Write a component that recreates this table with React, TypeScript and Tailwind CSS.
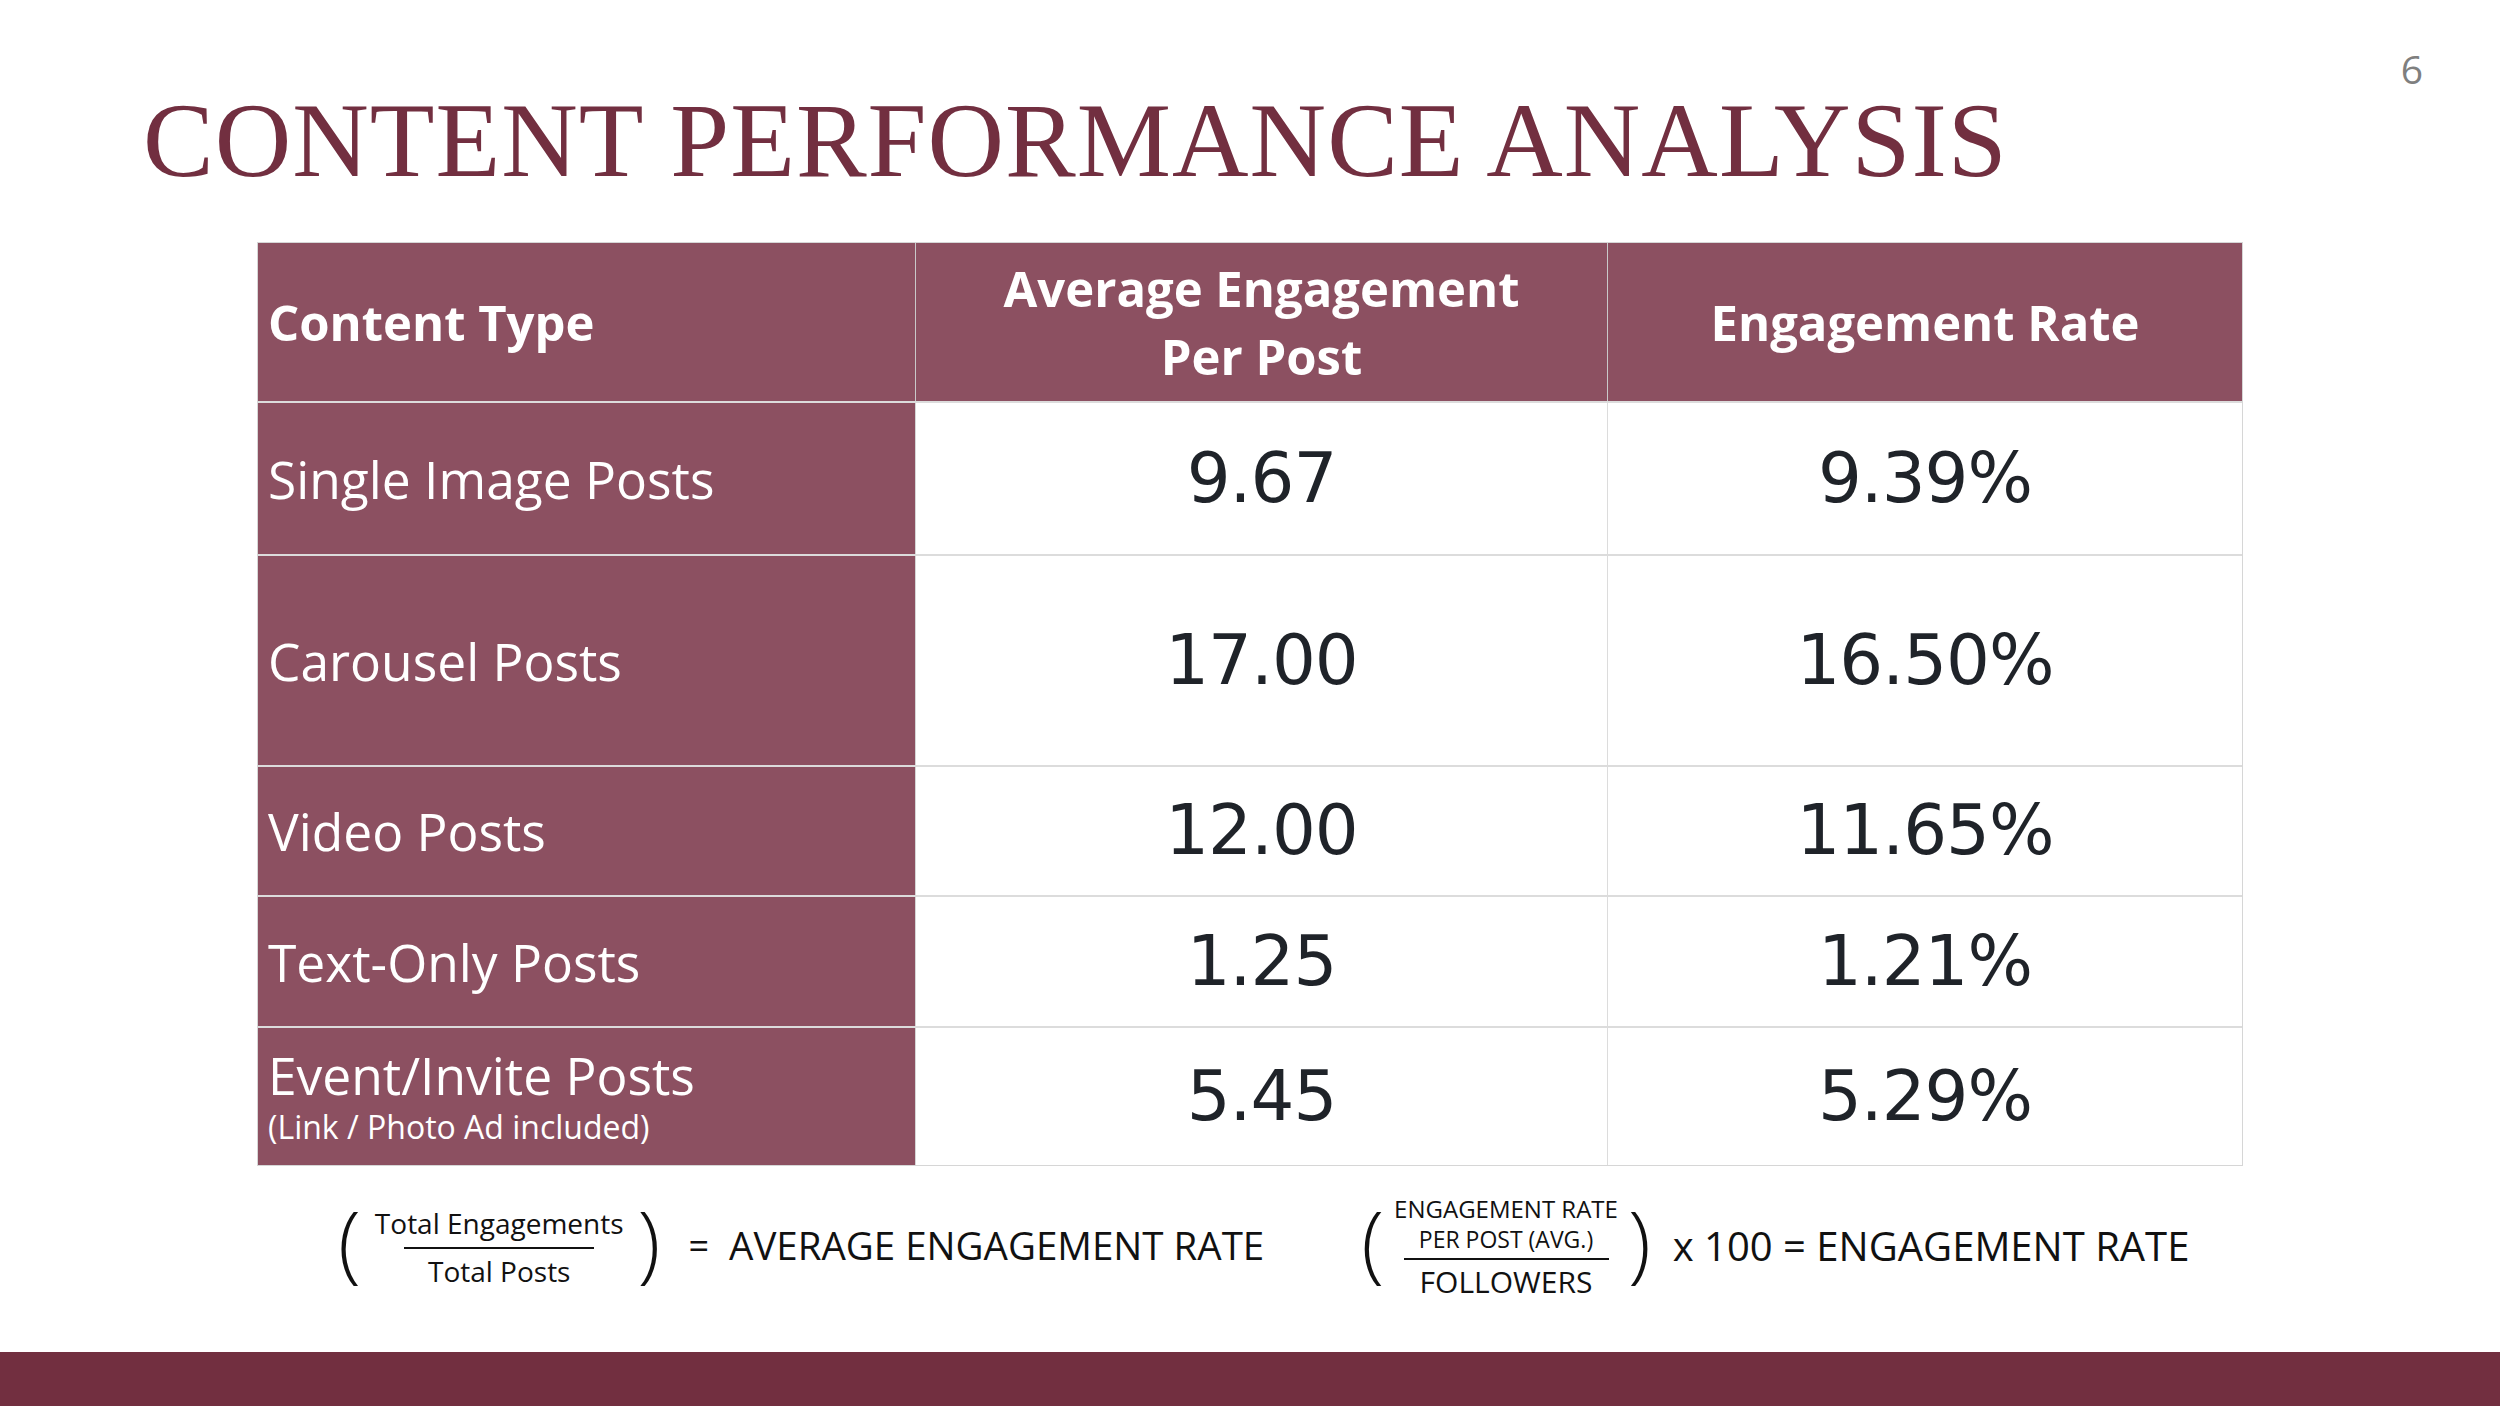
const rows = [
  { label: 'Single Image Posts', avg: '9.67', rate: '9.39%', h: 'h-[153px]' },
  { label: 'Carousel Posts', avg: '17.00', rate: '16.50%', h: 'h-[211px]' },
  { label: 'Video Posts', avg: '12.00', rate: '11.65%', h: 'h-[130px]' },
  { label: 'Text-Only Posts', avg: '1.25', rate: '1.21%', h: 'h-[131px]' },
  { label: 'Event/Invite Posts', sub: '(Link / Photo Ad included)', avg: '5.45', rate: '5.29%', h: 'h-[139px]' },
]

const sans = "font-['Open_Sans','Liberation_Sans',sans-serif]"

export default function App() {
  return (
    <div className="w-[2500px] h-[1406px] bg-white flex flex-col overflow-hidden">
      {/* Title + slide number */}
      <div className="flex justify-between items-start pl-[143px] pr-[77px]">
        <h1 className="pt-[88px] text-[106px] leading-none text-[#722f40] font-['Liberation_Serif','Times_New_Roman',serif] tracking-[1px]">
          CONTENT PERFORMANCE ANALYSIS
        </h1>
        <span className={`pt-[49px] text-[39px] leading-none text-[#7f7f7f] ${sans}`}>6</span>
      </div>

      {/* Table */}
      <div className="ml-[257px] mt-[48px] w-[1986px] border-[1.5px] border-[#d6d6d6] flex flex-col">
        <div className="grid grid-cols-[658px_692px_1fr] h-[158px] bg-[#8c5061] text-white font-bold text-[49px] leading-[68px]">
          <div className={`flex items-center pl-[10px] border-r-[1.5px] border-[#c9c9c9] ${sans}`}>Content Type</div>
          <div className={`flex items-center justify-center text-center border-r-[1.5px] border-[#c9c9c9] ${sans}`}>
            Average Engagement
            <br />
            Per Post
          </div>
          <div className={`flex items-center justify-center ${sans}`}>Engagement Rate</div>
        </div>

        {rows.map((r) => (
          <div key={r.label} className={`grid grid-cols-[658px_692px_1fr] border-t-[2px] border-[#dcdcdc] ${r.h}`}>
            <div className={`bg-[#8c5061] text-white flex flex-col justify-center pl-[10px] border-r-[1.5px] border-[#d6d6d6] ${sans}`}>
              <span className="text-[51.5px] leading-[54px]">{r.label}</span>
              {r.sub && <span className="text-[32px] leading-[38px] mt-[6px]">{r.sub}</span>}
            </div>
            <div className="flex items-center justify-center border-r-[1.5px] border-[#dcdcdc] text-[69px] text-[#1f2329] font-['DejaVu_Sans',sans-serif] tracking-[-1px]">
              {r.avg}
            </div>
            <div className="flex items-center justify-center text-[69px] text-[#1f2329] font-['DejaVu_Sans',sans-serif] tracking-[-1px]">
              {r.rate}
            </div>
          </div>
        ))}
      </div>

      {/* Formulas */}
      <div className={`flex-1 flex items-center pb-[26px] text-[#111] ${sans}`}>
        <div className="flex items-center ml-[338px]">
          <span className="text-[84px] font-light leading-none -mt-[10px]">(</span>
          <div className="flex flex-col items-center mx-[14px]">
            <span className="text-[28px] leading-[36px]">Total Engagements</span>
            <span className="w-[190px] h-[2px] bg-[#111] my-[6px]"></span>
            <span className="text-[28px] leading-[32px]">Total Posts</span>
          </div>
          <span className="text-[84px] font-light leading-none -mt-[10px]">)</span>
          <span className="text-[36px] ml-[28px]">=</span>
          <span className="text-[38.5px] ml-[20px]">AVERAGE ENGAGEMENT RATE</span>
        </div>

        <div className="flex items-center ml-[97px]">
          <span className="text-[84px] font-light leading-none -mt-[10px]">(</span>
          <div className="flex flex-col items-center mx-[10px]">
            <span className="text-[24px] leading-[31px]">ENGAGEMENT RATE</span>
            <span className="text-[23px] leading-[30px]">PER POST (AVG.)</span>
            <span className="w-[205px] h-[2px] bg-[#111] my-[4px]"></span>
            <span className="text-[30px] leading-[36px]">FOLLOWERS</span>
          </div>
          <span className="text-[84px] font-light leading-none -mt-[10px]">)</span>
          <span className="text-[40px] ml-[22px]">x 100 = ENGAGEMENT RATE</span>
        </div>
      </div>

      {/* Bottom bar */}
      <div className="h-[54px] bg-[#722f40]"></div>
    </div>
  )
}
